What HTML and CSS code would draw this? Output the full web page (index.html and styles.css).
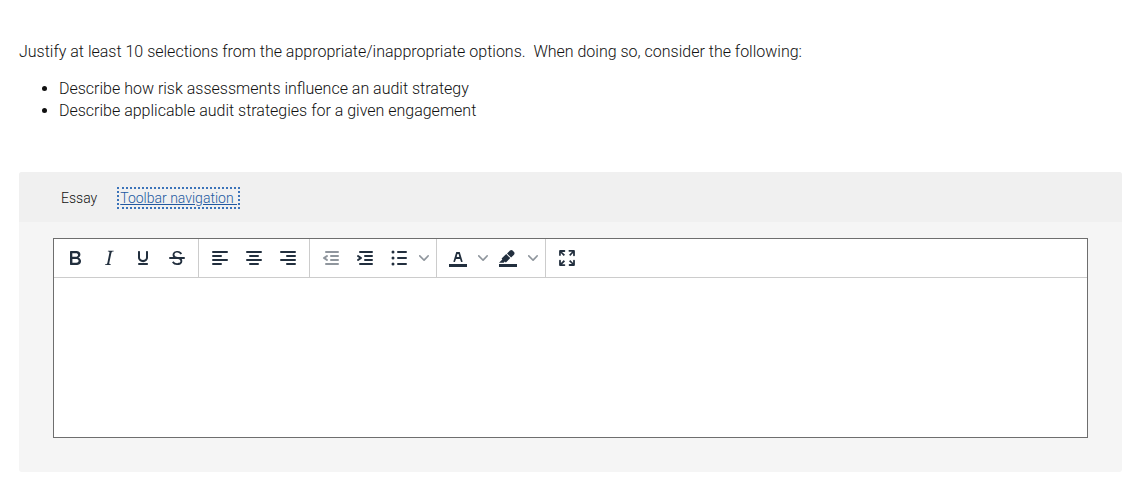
FILE: index.html
```html
<!DOCTYPE html>
<html lang="en">
<head>
  <meta charset="UTF-8">
  <meta name="viewport" content="width=device-width, initial-scale=1.0">
  <title>Essay question</title>
  <link rel="stylesheet" href="styles.css">
</head>
<body>
  <main class="question">
    <!-- Question text -->
    <div class="prompt">
      <p>Justify at least 10 selections from the appropriate/inappropriate options.&nbsp; When doing so, consider the following:</p>
      <ul>
        <li>Describe how risk assessments influence an audit strategy</li>
        <li>Describe applicable audit strategies for a given engagement</li>
      </ul>
    </div>

    <!-- Answer panel -->
    <section class="answer">
      <div class="answer-header">
        <label for="essay">Essay</label>
        <a class="toolbar-link" href="#toolbar">Toolbar navigation&nbsp;</a>
      </div>

      <div class="editor">
        <div class="toolbar" id="toolbar" role="toolbar" aria-label="Formatting">
          <div class="group">
            <button type="button" class="tool" aria-label="Bold">
              <svg width="24" height="24"><path fill-rule="evenodd" d="M7.8 19c-.3 0-.5 0-.6-.2l-.2-.5V5.7c0-.2 0-.4.2-.5l.6-.2h5c1.5 0 2.7.3 3.5 1 .7.6 1.1 1.4 1.1 2.5a3 3 0 01-.6 1.9c-.4.6-1 1-1.6 1.2.4.1.9.3 1.3.6s.8.7 1 1.2c.4.4.5 1 .5 1.6 0 1.3-.4 2.3-1.3 3-.8.7-2.1 1-3.8 1H7.8zm5-8.3c.6 0 1.2-.1 1.6-.5.4-.3.6-.7.6-1.3 0-1.1-.8-1.7-2.3-1.7H9.3v3.5h3.4zm.5 6c.7 0 1.3-.1 1.7-.4.4-.4.6-.9.6-1.5s-.2-1-.7-1.4c-.4-.3-1-.4-2-.4H9.4v3.8h4z"/></svg>
            </button>
            <button type="button" class="tool" aria-label="Italic">
              <svg width="24" height="24"><path d="M16.7 4.7l-.1.9h-.3c-.6 0-1 0-1.4.3-.3.3-.4.6-.5 1.1l-2.1 9.8v.6c0 .5.4.8 1.4.8h.2l-.2.8H8l.2-.8h.2c1.1 0 1.8-.5 2-1.5l2-9.8.1-.5c0-.6-.4-.8-1.4-.8h-.3l.2-.9h5.8z"/></svg>
            </button>
            <button type="button" class="tool" aria-label="Underline">
              <svg width="24" height="24"><path d="M16 5c.6 0 1 .4 1 1v5.5a4 4 0 01-.4 1.8l-1 1.4a5.3 5.3 0 01-5.5 1 5 5 0 01-1.6-1c-.5-.4-.8-.9-1.1-1.4a4 4 0 01-.4-1.8V6c0-.6.4-1 1-1s1 .4 1 1v5.5c0 .3 0 .6.2 1l.6.7a3.3 3.3 0 002.2.8 3.4 3.4 0 002.2-.8c.3-.2.4-.5.6-.8l.2-.9V6c0-.6.4-1 1-1zM8 17h8c.6 0 1 .4 1 1s-.4 1-1 1H8a1 1 0 010-2z"/></svg>
            </button>
            <button type="button" class="tool" aria-label="Strikethrough">
              <svg width="24" height="24"><path d="M15.6 8.5c-.5-.7-1-1.1-1.3-1.3-.6-.4-1.3-.6-2-.6-2.7 0-2.8 1.7-2.8 2.1 0 1.6 1.8 2 3.2 2.3 4.4.9 4.6 2.8 4.6 3.9 0 1.4-.7 4.1-5 4.1A6.2 6.2 0 017 16.4l1.5-1.1c.4.6 1.6 2 3.7 2 1.6 0 2.5-.4 3-1.2.4-.8.3-2-.8-2.6-.7-.4-1.6-.7-2.9-1-1-.2-3.9-.8-3.9-3.6C7.6 6 10.3 5 12.4 5c2.9 0 4.2 1.6 4.7 2.4l-1.5 1.1z"/><path d="M5 11h14a1 1 0 010 2H5a1 1 0 010-2z"/></svg>
            </button>
          </div>

          <div class="group">
            <button type="button" class="tool" aria-label="Align left">
              <svg width="24" height="24"><path class="bars" d="M5 6h14M5 10h8M5 14h14M5 18h8"/></svg>
            </button>
            <button type="button" class="tool" aria-label="Align center">
              <svg width="24" height="24"><path class="bars" d="M5 6h14M8 10h8M5 14h14M8 18h8"/></svg>
            </button>
            <button type="button" class="tool" aria-label="Align right">
              <svg width="24" height="24"><path class="bars" d="M5 6h14M11 10h8M5 14h14M11 18h8"/></svg>
            </button>
          </div>

          <div class="group">
            <button type="button" class="tool" aria-label="Decrease indent" disabled>
              <svg width="24" height="24"><path class="bars" d="M7 6h12M12 10h7M12 14h7M7 18h12"/><path d="M8.6 13.2a1 1 0 01-1.2 1.6l-3-2a1 1 0 010-1.6l3-2a1 1 0 011.2 1.6L6.8 12l1.8 1.2z"/></svg>
            </button>
            <button type="button" class="tool" aria-label="Increase indent">
              <svg width="24" height="24"><path class="bars" d="M7 6h12M12 10h7M12 14h7M7 18h12"/><path d="M4.4 13.2L6.2 12l-1.8-1.2a1 1 0 011.2-1.6l3 2a1 1 0 010 1.6l-3 2a1 1 0 11-1.2-1.6z"/></svg>
            </button>
            <button type="button" class="tool split" aria-label="Bullet list">
              <svg width="24" height="24"><path class="bars" d="M11 6h8M11 12h8M11 18h8"/><circle cx="6" cy="6" r="1.5"/><circle cx="6" cy="12" r="1.5"/><circle cx="6" cy="18" r="1.5"/></svg>
              <svg class="chevron" width="10" height="10"><path d="M8.7 2.2c.3-.3.8-.3 1 0 .4.4.4.9 0 1.2L5.7 7.8c-.3.3-.9.3-1.2 0L.2 3.4a.8.8 0 010-1.2c.3-.3.8-.3 1.1 0L5 6l3.7-3.8z"/></svg>
            </button>
          </div>

          <div class="group">
            <button type="button" class="tool split" aria-label="Text color">
              <svg width="24" height="24"><path d="M3 18h18v3H3z"/><path fill-rule="evenodd" d="M8.7 16h-.8a.5.5 0 01-.5-.6l2.7-9c.1-.3.3-.4.5-.4h2.8c.2 0 .4.1.5.4l2.7 9a.5.5 0 01-.5.6h-.8a.5.5 0 01-.4-.4l-.7-2.2c0-.3-.3-.4-.5-.4h-3.4c-.2 0-.4.1-.5.4l-.7 2.2c0 .3-.2.4-.4.4zm2.6-7.6l-.6 2a.5.5 0 00.5.6h1.6a.5.5 0 00.5-.6l-.6-2c0-.3-.3-.4-.5-.4h-.4c-.2 0-.4.1-.5.4z"/></svg>
              <svg class="chevron" width="10" height="10"><path d="M8.7 2.2c.3-.3.8-.3 1 0 .4.4.4.9 0 1.2L5.7 7.8c-.3.3-.9.3-1.2 0L.2 3.4a.8.8 0 010-1.2c.3-.3.8-.3 1.1 0L5 6l3.7-3.8z"/></svg>
            </button>
            <button type="button" class="tool split" aria-label="Background color">
              <svg width="24" height="24"><path d="M3 18h18v3H3z"/><path d="M7.7 16.7H3l3.3-3.3-.7-.8L10.2 8l4 4.1-4 4.2c-.2.2-.6.2-.8 0l-.6-.7-1.1 1.1zm5-7.5L11 7.4l3-2.9a2 2 0 012.6 0L18 6c.7.7.7 2 0 2.7l-2.9 2.9-1.8-1.8-.5-.6"/></svg>
              <svg class="chevron" width="10" height="10"><path d="M8.7 2.2c.3-.3.8-.3 1 0 .4.4.4.9 0 1.2L5.7 7.8c-.3.3-.9.3-1.2 0L.2 3.4a.8.8 0 010-1.2c.3-.3.8-.3 1.1 0L5 6l3.7-3.8z"/></svg>
            </button>
          </div>

          <div class="group">
            <button type="button" class="tool" aria-label="Fullscreen">
              <svg width="24" height="24"><path d="M15.3 10l-1.2-1.3 2.9-3h-2.3a.9.9 0 110-1.7H19c.5 0 .9.4.9.9v4.4a.9.9 0 11-1.8 0V7l-2.8 3zm0 4l2.8 3v-2.3a.9.9 0 111.8 0V19c0 .5-.4.9-.9.9h-4.4a.9.9 0 110-1.8H17l-3-2.9 1.3-1.2zM10 15.4l-2.9 2.8h2.3a.9.9 0 110 1.8H5a.9.9 0 01-.9-.9v-4.4a.9.9 0 111.8 0V17l2.9-3 1.2 1.4zM8.7 10L5.8 7v2.3a.9.9 0 01-1.7 0V5c0-.5.4-.9.9-.9h4.4a.9.9 0 010 1.8H7l3 2.8L8.7 10z"/></svg>
            </button>
          </div>
        </div>
        <textarea id="essay" class="essay-text"></textarea>
      </div>
    </section>
  </main>
</body>
</html>
```
FILE: styles.css
```css
* { box-sizing: border-box; }

body {
  margin: 0;
  background: #fff;
  color: #111;
  font-family: Roboto, "Open Sans", sans-serif;
  font-size: 16px;
  font-weight: 300;
  line-height: 22px;
}

.question { padding: 41px 0 10px 19px; }

/* Question text */
.prompt { margin-bottom: 50px; }
.prompt p { margin: 0 0 15px; }
.prompt ul {
  margin: 0;
  padding-left: 40px;
}

/* Answer panel */
.answer {
  background: #f5f5f5;
  border-radius: 3px;
  overflow: hidden;
}
.answer-header {
  display: flex;
  align-items: center;
  gap: 20px;
  height: 50px;
  padding: 2px 42px 0;
  background: #f0f0f0;
  font-size: 14px;
  line-height: 18px;
}
.toolbar-link {
  padding: 0 1px;
  border: 2px dotted #3b73b9;
  color: #2259a0;
}

/* Editor */
.editor {
  margin: 16px 34px 34px;
  border: 1px solid #6e6e6e;
  background: #fff;
}
.toolbar {
  display: flex;
  border-bottom: 1px solid #ccc;
}
.group {
  display: flex;
  align-items: center;
  height: 38px;
  padding: 0 4px;
  border-right: 1px solid #ccc;
}
.group:last-child { border-right: 0; }
.tool {
  display: flex;
  align-items: center;
  justify-content: center;
  width: 34px;
  height: 34px;
  padding: 0;
  border: 0;
  background: none;
  fill: #222f3e;
  stroke: none;
  cursor: pointer;
}
.tool:hover { background: #dee0e2; }
.tool:disabled {
  opacity: 0.5;
  cursor: default;
}
.tool .bars {
  fill: none;
  stroke: #222f3e;
  stroke-width: 2;
  stroke-linecap: round;
}
.split {
  justify-content: flex-start;
  gap: 8px;
  width: 50px;
  padding-left: 5px;
}
.chevron { opacity: 0.5; }

.essay-text {
  display: block;
  width: 100%;
  height: 159px;
  padding: 10px;
  border: 0;
  outline: 0;
  resize: none;
  background: #fff;
  color: #222;
  font: inherit;
}
```
